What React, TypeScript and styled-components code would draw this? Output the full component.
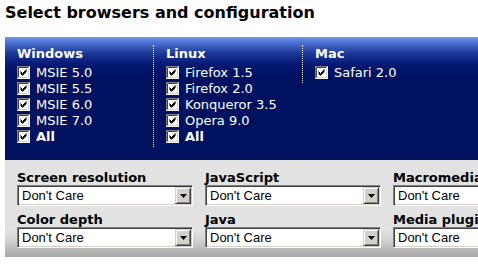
import React from 'react';
import styled, { createGlobalStyle } from 'styled-components';

const GlobalStyle = createGlobalStyle`
  html, body {
    margin: 0;
    padding: 0;
    background: #ffffff;
    overflow: hidden;
  }
`;

const Page = styled.div`
  width: 700px;
  padding: 3px 0 0 5px;
  font-family: 'DejaVu Sans', Verdana, sans-serif;
`;

const Title = styled.h1`
  margin: 0 0 14px;
  font-size: 16px;
  line-height: 20px;
  font-weight: bold;
  color: #000000;
`;

const BrowserPanel = styled.div`
  height: 123px;
  box-sizing: border-box;
  padding: 8px 0 0 12px;
  display: flex;
  align-items: flex-start;
  background: linear-gradient(
    to bottom,
    #7196ea 0px,
    #4a6fd0 6px,
    #1d3a99 16px,
    #071c77 26px,
    #021266 34px,
    #001160 44px,
    #001160 100%
  );
`;

const Column = styled.div<{ $divider?: boolean }>`
  width: 136px;
  padding: 1px 0 3px ${({ $divider }) => ($divider ? '12px' : '0')};
  border-left: ${({ $divider }) => ($divider ? '1px dotted #ffffff' : 'none')};
  color: #ffffff;
`;

const ColumnTitle = styled.div`
  font-size: 13px;
  line-height: 16px;
  font-weight: bold;
  margin-bottom: 2px;
`;

const CheckRow = styled.label<{ $bold?: boolean }>`
  display: flex;
  align-items: center;
  gap: 6px;
  height: 16px;
  font-size: 13px;
  font-weight: ${({ $bold }) => ($bold ? 'bold' : 'normal')};
  white-space: nowrap;
`;

const Box = styled.svg`
  flex: none;
  width: 13px;
  height: 13px;
  display: block;
`;

const Checkbox = () => (
  <Box viewBox="0 0 13 13">
    <rect x="0" y="0" width="13" height="13" fill="#ffffff" />
    <path d="M0.5 12.5V0.5H12.5" stroke="#808080" fill="none" />
    <path d="M1.5 11.5V1.5H11.5" stroke="#404040" fill="none" />
    <path d="M1.5 11.5H11.5V1.5" stroke="#d4d0c8" fill="none" />
    <rect x="2" y="2" width="9" height="9" fill="#ffffff" />
    <path d="M3.5 5.5l2 2 4-4M3.5 6.5l2 2 4-4M3.5 7.5l2 2 4-4" stroke="#000000" fill="none" />
  </Box>
);

const ConfigPanel = styled.div`
  box-sizing: border-box;
  height: 97px;
  padding: 10px 0 0 12px;
  display: grid;
  grid-template-columns: repeat(3, 176px);
  column-gap: 12px;
  row-gap: 6px;
  align-content: start;
  background: linear-gradient(
    to bottom,
    #e2e2e2 0px,
    #e2e2e2 70px,
    #d2d2d2 80px,
    #b8b8b8 90px,
    #a8a8a8 100%
  );
`;

const Field = styled.div`
  display: flex;
  flex-direction: column;
`;

const FieldLabel = styled.div`
  font-size: 13px;
  line-height: 15px;
  font-weight: bold;
  color: #000000;
  white-space: nowrap;
`;

const Select = styled.div`
  box-sizing: border-box;
  height: 21px;
  display: flex;
  align-items: stretch;
  background: #ffffff;
  border-style: solid;
  border-width: 1px;
  border-color: #808080 #ffffff #ffffff #808080;
  box-shadow: inset 1px 1px 0 #404040, inset -1px -1px 0 #d4d0c8;
`;

const SelectText = styled.span`
  flex: 1;
  padding: 1px 0 0 4px;
  font-family: 'Liberation Sans', Arial, sans-serif;
  font-size: 13px;
  line-height: 17px;
  color: #000000;
  white-space: nowrap;
  overflow: hidden;
`;

const DropButton = styled.span`
  flex: none;
  width: 16px;
  margin: 1px;
  box-sizing: border-box;
  display: flex;
  align-items: center;
  justify-content: center;
  background: #d4d0c8;
  border-style: solid;
  border-width: 1px;
  border-color: #d4d0c8 #404040 #404040 #d4d0c8;
  box-shadow: inset 1px 1px 0 #ffffff, inset -1px -1px 0 #808080;
`;

const Dropdown = () => (
  <Select>
    <SelectText>Don't Care</SelectText>
    <DropButton>
      <svg width="7" height="4" viewBox="0 0 7 4">
        <path d="M0 0h7L3.5 4z" fill="#000000" />
      </svg>
    </DropButton>
  </Select>
);

const browsers = [
  { os: 'Windows', items: ['MSIE 5.0', 'MSIE 5.5', 'MSIE 6.0', 'MSIE 7.0'], all: true },
  { os: 'Linux', items: ['Firefox 1.5', 'Firefox 2.0', 'Konqueror 3.5', 'Opera 9.0'], all: true },
  { os: 'Mac', items: ['Safari 2.0'], all: false },
];

const fields = [
  'Screen resolution',
  'JavaScript',
  'Macromedia Flash',
  'Color depth',
  'Java',
  'Media plugins',
];

const App: React.FC = () => (
  <Page>
    <GlobalStyle />
    <Title>Select browsers and configuration</Title>

    <BrowserPanel>
      {browsers.map((group, i) => (
        <Column key={group.os} $divider={i > 0}>
          <ColumnTitle>{group.os}</ColumnTitle>
          {group.items.map((item) => (
            <CheckRow key={item}>
              <Checkbox />
              {item}
            </CheckRow>
          ))}
          {group.all && (
            <CheckRow $bold>
              <Checkbox />
              All
            </CheckRow>
          )}
        </Column>
      ))}
    </BrowserPanel>

    <ConfigPanel>
      {fields.map((name) => (
        <Field key={name}>
          <FieldLabel>{name}</FieldLabel>
          <Dropdown />
        </Field>
      ))}
    </ConfigPanel>
  </Page>
);

export default App;
